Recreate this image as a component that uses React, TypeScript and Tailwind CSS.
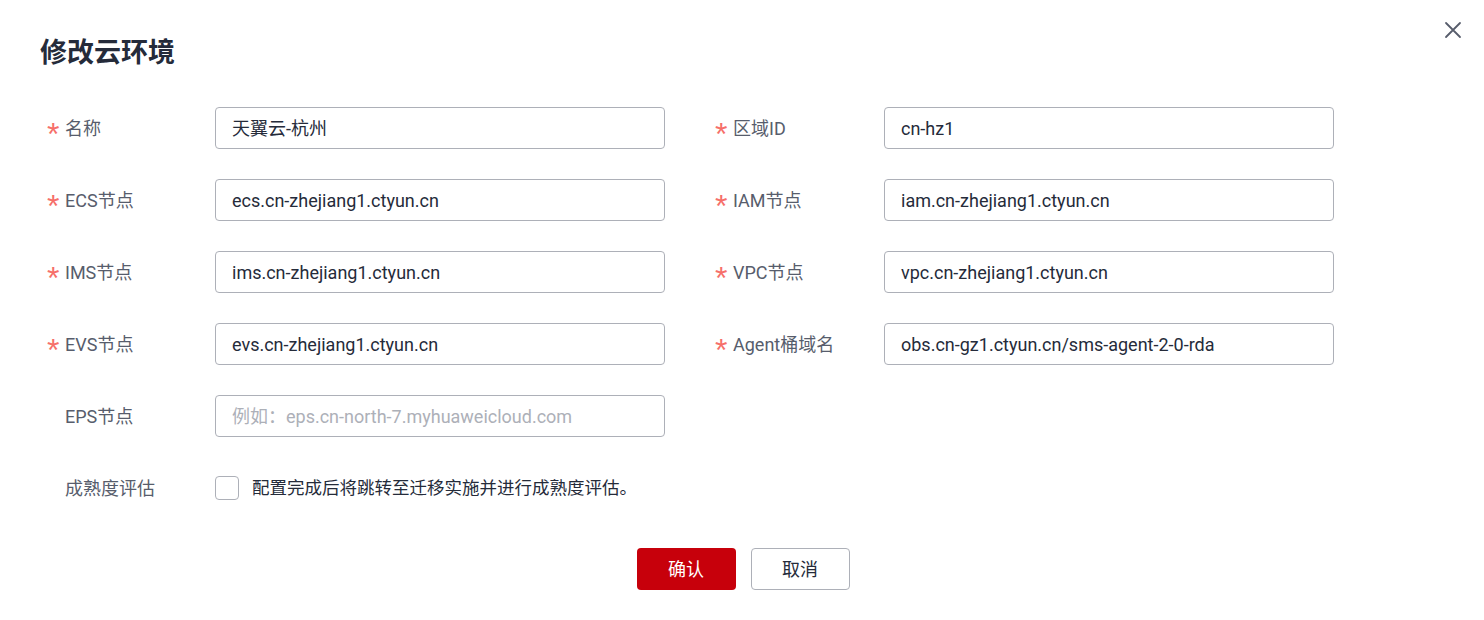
import React from "react";

const font = { fontFamily: 'Roboto, "Noto Sans CJK SC", "Noto Sans", sans-serif' };

function Label({ text, required }: { text: string; required?: boolean }) {
  return (
    <div className="flex items-center h-[42px] text-[18px] text-[#575d6c]">
      <span
        className="w-[18px] text-[#f66f6a] text-[32px] leading-none pt-[12px]"
        style={{ fontFamily: '"Liberation Sans", Arial, sans-serif' }}
      >
        {required ? "*" : ""}
      </span>
      <span>{text}</span>
    </div>
  );
}

function Input({ value, placeholder }: { value?: string; placeholder?: string }) {
  return (
    <div className="w-[450px] h-[42px] border border-[#adb0b8] rounded-[4px] flex items-center px-4 text-[18px]">
      {value ? (
        <span className="text-[#252b3a]">{value}</span>
      ) : (
        <span className="text-[#adb0b8]">{placeholder}</span>
      )}
    </div>
  );
}

function Field({ label, value, placeholder, required = true, labelW }: { label: string; value?: string; placeholder?: string; required?: boolean; labelW: string }) {
  return (
    <div className="flex items-center">
      <div className={labelW}>
        <Label text={label} required={required} />
      </div>
      <Input value={value} placeholder={placeholder} />
    </div>
  );
}

export default function App() {
  const rows: [string, string, string, string][] = [
    ["名称", "天翼云-杭州", "区域ID", "cn-hz1"],
    ["ECS节点", "ecs.cn-zhejiang1.ctyun.cn", "IAM节点", "iam.cn-zhejiang1.ctyun.cn"],
    ["IMS节点", "ims.cn-zhejiang1.ctyun.cn", "VPC节点", "vpc.cn-zhejiang1.ctyun.cn"],
    ["EVS节点", "evs.cn-zhejiang1.ctyun.cn", "Agent桶域名", "obs.cn-gz1.ctyun.cn/sms-agent-2-0-rda"],
  ];
  return (
    <div className="relative w-[1484px] h-[620px] bg-white overflow-hidden" style={font}>
      <button className="absolute left-[1444px] top-[21px] w-[18px] h-[18px] flex items-center justify-center">
        <svg width="18" height="18" viewBox="0 0 18 18" fill="none">
          <path d="M2 2 L16 16 M16 2 L2 16" stroke="#575d6c" strokeWidth="1.8" strokeLinecap="round" />
        </svg>
      </button>
      <div className="pt-[35px] pl-10 text-[27px] leading-[36px] font-bold text-[#252b3a]">修改云环境</div>
      <div className="mt-[36px] pl-[47px] flex flex-col gap-[30px]">
        {rows.map((r) => (
          <div key={r[0]} className="flex gap-[50px]">
            <Field label={r[0]} value={r[1]} labelW="w-[168px]" />
            <Field label={r[2]} value={r[3]} labelW="w-[169px]" />
          </div>
        ))}
        <div className="flex">
          <Field label="EPS节点" placeholder="例如：eps.cn-north-7.myhuaweicloud.com" required={false} labelW="w-[168px]" />
        </div>
        <div className="flex items-center h-[42px]">
          <div className="w-[168px]">
            <Label text="成熟度评估" />
          </div>
          <div className="flex items-center">
            <div className="w-[24px] h-[24px] border border-[#adb0b8] rounded-[4px] bg-white" />
            <span className="ml-[13px] text-[17.5px] text-[#252b3a]">配置完成后将跳转至迁移实施并进行成熟度评估。</span>
          </div>
        </div>
      </div>
      <div className="mt-[39px] flex justify-center gap-[15px] pl-[2px]">
        <button className="w-[99px] h-[42px] rounded-[4px] bg-[#c7000b] text-white text-[18px]">确认</button>
        <button className="w-[99px] h-[42px] rounded-[4px] border border-[#adb0b8] bg-white text-[#252b3a] text-[18px]">取消</button>
      </div>
    </div>
  );
}
